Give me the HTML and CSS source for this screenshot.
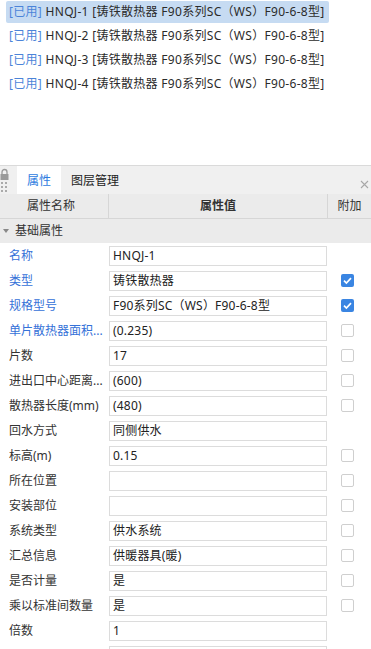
FILE: index.html
```html
<!DOCTYPE html>
<html lang="zh">
<head>
<meta charset="UTF-8">
<meta name="viewport" content="width=device-width, initial-scale=1.0">
<title>属性</title>
<link rel="stylesheet" href="styles.css">
</head>
<body>
    <!-- Component list -->
    <div class="list-area">
        <ul class="comp-list">
            <li class="comp selected"><span class="used">[已用]</span> HNQJ-1 [铸铁散热器 F90系列SC（WS）F90-6-8型]</li>
            <li class="comp"><span class="used">[已用]</span> HNQJ-2 [铸铁散热器 F90系列SC（WS）F90-6-8型]</li>
            <li class="comp"><span class="used">[已用]</span> HNQJ-3 [铸铁散热器 F90系列SC（WS）F90-6-8型]</li>
            <li class="comp"><span class="used">[已用]</span> HNQJ-4 [铸铁散热器 F90系列SC（WS）F90-6-8型]</li>
        </ul>
    </div>

    <!-- Properties panel -->
    <div class="panel">
        <div class="tabbar">
            <div class="grip">
                <svg width="9" height="24" viewBox="0 0 9 24">
                    <path d="M2 6V4a2.5 2.5 0 0 1 5 0v2" fill="none" stroke="#9a9a9a" stroke-width="1.3"/>
                    <rect x="0.5" y="6" width="8" height="6" fill="#9a9a9a"/>
                    <rect x="1" y="14" width="2" height="2" fill="#aaa"/>
                    <rect x="5" y="14" width="2" height="2" fill="#aaa"/>
                    <rect x="1" y="18" width="2" height="2" fill="#aaa"/>
                    <rect x="5" y="18" width="2" height="2" fill="#aaa"/>
                    <rect x="1" y="22" width="2" height="2" fill="#aaa"/>
                    <rect x="5" y="22" width="2" height="2" fill="#aaa"/>
                </svg>
            </div>
            <div class="tab active">属性</div>
            <div class="tab">图层管理</div>
            <div class="close">
                <svg width="9" height="9" viewBox="0 0 9 9">
                    <path d="M1 1L8 8M8 1L1 8" stroke="#a8a8a8" stroke-width="1.1"/>
                </svg>
            </div>
        </div>

        <div class="grid-head">
            <div class="col-name">属性名称</div>
            <div class="col-value">属性值</div>
            <div class="col-extra">附加</div>
        </div>

        <div class="group">
            <span class="caret"></span>基础属性
        </div>

        <div class="rows" id="rows"></div>
    </div>

    <script>
        // Property rows: [label, value, blue label, checkbox state]
        const props = [
            ["名称", "HNQJ-1", true, null],
            ["类型", "铸铁散热器", true, "on"],
            ["规格型号", "F90系列SC（WS）F90-6-8型", true, "on"],
            ["单片散热器面积...", "(0.235)", true, "off"],
            ["片数", "17", false, "off"],
            ["进出口中心距离...", "(600)", false, "off"],
            ["散热器长度(mm)", "(480)", false, "off"],
            ["回水方式", "同侧供水", false, null],
            ["标高(m)", "0.15", false, "off"],
            ["所在位置", "", false, "off"],
            ["安装部位", "", false, "off"],
            ["系统类型", "供水系统", false, "off"],
            ["汇总信息", "供暖器具(暖)", false, "off"],
            ["是否计量", "是", false, "off"],
            ["乘以标准间数量", "是", false, "off"],
            ["倍数", "1", false, null],
            ["", "", false, null]
        ];

        const rows = document.getElementById("rows");
        const check = `<svg width="13" height="13" viewBox="0 0 13 13"><path d="M3 6.6l2.4 2.4L10 4.2" fill="none" stroke="#fff" stroke-width="1.7"/></svg>`;

        props.forEach(([label, value, blue, box]) => {
            const row = document.createElement("div");
            row.className = "row";
            let boxHtml = "";
            if (box === "on") boxHtml = `<span class="cb checked">${check}</span>`;
            if (box === "off") boxHtml = `<span class="cb"></span>`;
            row.innerHTML = `
                <div class="label${blue ? " blue" : ""}">${label}</div>
                <div class="value">${value}</div>
                <div class="extra">${boxHtml}</div>
            `;
            rows.appendChild(row);
        });
    </script>
</body>
</html>
```

FILE: styles.css
```css
/* General */
* {
    margin: 0;
    padding: 0;
    box-sizing: border-box;
}

body {
    width: 371px;
    height: 649px;
    overflow: hidden;
    background: #fff;
    color: #333;
    font-family: "Noto Sans", "Noto Sans CJK SC", sans-serif;
    font-size: 12px;
}

/* Component list */
.list-area {
    height: 165px;
    padding-top: 1px;
}

.comp-list {
    list-style: none;
}

.comp {
    height: 22px;
    line-height: 22px;
    margin: 0 0 2px 6px;
    width: 323px;
    padding-left: 3px;
    border-radius: 2px;
    white-space: nowrap;
    letter-spacing: 0.3px;
    color: #2b2b2b;
}

.comp.selected {
    background: #c6dbf2;
}

.comp .used {
    color: #4b84d9;
}

/* Panel */
.panel {
    border-top: 1px solid #dadada;
}

.tabbar {
    height: 28px;
    display: flex;
    align-items: stretch;
    background: #f0f0f0;
}

.grip {
    width: 17px;
    padding-top: 2px;
}

.tab {
    width: 44px;
    line-height: 29px;
    text-align: center;
    color: #222;
}

.tab.active {
    background: #fff;
    color: #2d7be0;
}

.tab + .tab {
    width: 68px;
}

.close {
    margin-left: auto;
    padding: 10px 2px 0 0;
}

/* Grid header */
.grid-head {
    display: flex;
    height: 25px;
    background: #ebebeb;
    border-bottom: 1px solid #d6d6d6;
    line-height: 24px;
}

.col-name {
    width: 109px;
    text-align: center;
    padding-right: 6px;
    border-right: 1px solid #d6d6d6;
}

.col-value {
    width: 219px;
    text-align: center;
    font-weight: bold;
    border-right: 1px solid #d6d6d6;
}

.col-extra {
    flex: 1;
    text-align: center;
}

.group {
    height: 24px;
    line-height: 24px;
    background: #ebebeb;
    padding-left: 3px;
    display: flex;
    align-items: center;
}

.caret {
    width: 0;
    height: 0;
    border-left: 3px solid transparent;
    border-right: 3px solid transparent;
    border-top: 4px solid #888;
    margin-right: 6px;
}

/* Property rows */
.row {
    display: flex;
    height: 25px;
    padding-top: 3px;
}

.label {
    width: 109px;
    padding: 0 2px 0 9px;
    line-height: 20px;
    white-space: nowrap;
    overflow: hidden;
    color: #333;
}

.label.blue {
    color: #3571d8;
}

.value {
    width: 218px;
    height: 20px;
    line-height: 18px;
    padding-left: 3px;
    border: 1px solid #dcdcdc;
    white-space: nowrap;
    letter-spacing: 0.2px;
    color: #222;
}

.extra {
    padding: 3px 0 0 14px;
}

.cb {
    display: block;
    width: 13px;
    height: 13px;
    border: 1px solid #cfcfcf;
    border-radius: 2px;
    background: #fff;
}

.cb.checked {
    border: none;
    background: #3a85e2;
}

.cb svg {
    display: block;
}
```
